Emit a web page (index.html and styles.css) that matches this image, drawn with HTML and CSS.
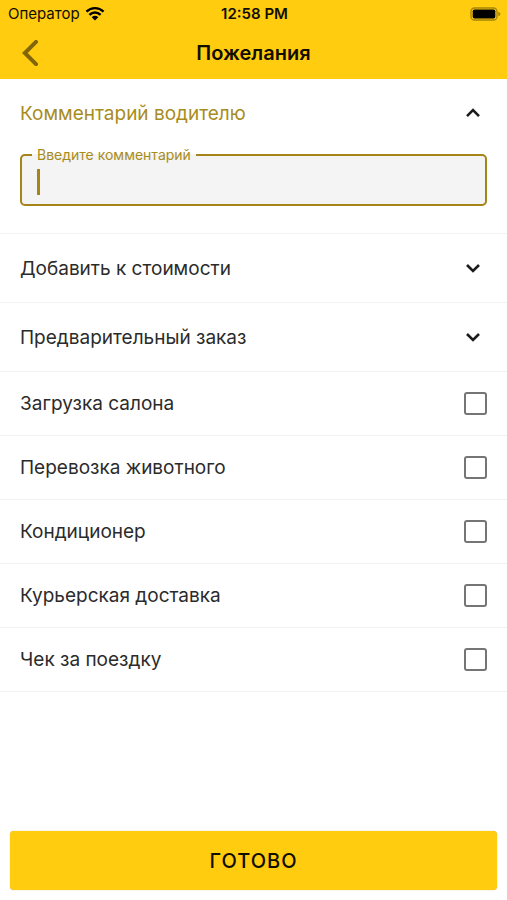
FILE: index.html
```html
<!DOCTYPE html>
<html lang="ru">
<head>
  <meta charset="utf-8">
  <meta name="viewport" content="width=device-width, initial-scale=1">
  <title>Пожелания</title>
  <link rel="stylesheet" href="styles.css">
</head>
<body>
  <header class="header">
    <div class="status">
      <span class="carrier">Оператор
        <svg class="wifi" viewBox="0 0 18 14" aria-hidden="true">
          <path d="M1 5.2C5.6.9 12.4.9 17 5.2M3.8 8.2c3-2.8 7.4-2.8 10.4 0" fill="none" stroke="currentColor" stroke-width="2.3"/>
          <path d="M9 13.6 5.9 10.4c1.8-1.6 4.4-1.6 6.2 0z" fill="currentColor"/>
        </svg>
      </span>
      <time class="clock">12:58 PM</time>
      <svg class="battery" viewBox="0 0 31 14" aria-hidden="true">
        <rect x="1" y="1" width="26" height="12" rx="3.5" fill="none" stroke="#a5840b" stroke-width="1.3"/>
        <rect x="2.7" y="2.5" width="22.6" height="9" rx="1.8" fill="#000"/>
        <path d="M28.3 4.8c2.8 1 2.8 3.4 0 4.4z" fill="#a5840b"/>
      </svg>
    </div>
    <div class="title-bar">
      <button class="back" type="button" aria-label="Назад">
        <svg class="back-icon" viewBox="0 0 16 26" aria-hidden="true"><path d="M14 1.8 2.8 13 14 24.2"/></svg>
      </button>
      <h1 class="title">Пожелания</h1>
    </div>
  </header>

  <main class="options">
    <section class="comment">
      <button class="row row-open" type="button" aria-expanded="true">
        Комментарий водителю
        <svg class="chevron" viewBox="0 0 16 10" aria-hidden="true"><path d="M2 8.2 8 2.2l6 6"/></svg>
      </button>
      <fieldset class="field">
        <legend class="legend"><label for="comment">Введите комментарий</label></legend>
        <span class="caret"></span>
        <input class="input" id="comment" type="text">
      </fieldset>
    </section>
    <button class="row row-section" type="button" aria-expanded="false">
      Добавить к стоимости
      <svg class="chevron" viewBox="0 0 16 10" aria-hidden="true"><path d="m2 2 6 6 6-6"/></svg>
    </button>
    <button class="row row-section" type="button" aria-expanded="false">
      Предварительный заказ
      <svg class="chevron" viewBox="0 0 16 10" aria-hidden="true"><path d="m2 2 6 6 6-6"/></svg>
    </button>
    <label class="row row-check">Загрузка салона <input class="check" type="checkbox"></label>
    <label class="row row-check">Перевозка животного <input class="check" type="checkbox"></label>
    <label class="row row-check">Кондиционер <input class="check" type="checkbox"></label>
    <label class="row row-check">Курьерская доставка <input class="check" type="checkbox"></label>
    <label class="row row-check">Чек за поездку <input class="check" type="checkbox"></label>
  </main>

  <footer class="footer">
    <button class="submit" type="button">ГОТОВО</button>
  </footer>
</body>
</html>
```
FILE: styles.css
```css
* {
  box-sizing: border-box;
}

body {
  display: flex;
  flex-direction: column;
  min-height: 100vh;
  margin: 0;
  background: #fff;
  color: #2b2b2b;
  font-family: Inter, "Liberation Sans", sans-serif;
  font-size: 19px;
}

button {
  border: 0;
  background: none;
  color: inherit;
  font: inherit;
  cursor: pointer;
}

.header {
  background: #ffcc0f;
  color: #110e00;
}

.status {
  display: grid;
  grid-template-columns: 1fr auto 1fr;
  align-items: center;
  height: 27px;
  padding: 0 6px 0 8px;
  font-size: 15px;
}

.carrier {
  display: flex;
  align-items: center;
  gap: 5px;
}

.wifi {
  width: 20px;
  height: 15px;
  color: #000;
}

.clock {
  font-weight: 600;
}

.battery {
  justify-self: end;
  width: 31px;
  height: 14px;
}

.title-bar {
  display: grid;
  grid-template-columns: 64px 1fr 64px;
  align-items: center;
  height: 52px;
}

.back {
  display: flex;
  align-items: center;
  height: 52px;
  padding: 0 22px;
}

.back-icon {
  width: 16px;
  height: 26px;
  fill: none;
  stroke: #806608;
  stroke-linecap: round;
  stroke-width: 4;
}

.title {
  margin: 0;
  font-size: 20px;
  font-weight: 600;
  text-align: center;
}

.options {
  flex: 1;
}

.row {
  display: flex;
  align-items: center;
  justify-content: space-between;
  width: 100%;
  padding: 0 20px;
  text-align: left;
}

.row-open {
  height: 68px;
  padding-right: 26px;
  color: #a88c1c;
}

.row-section {
  height: 69px;
  padding-right: 26px;
  border-bottom: 1px solid #f2f2f2;
}

.row-check {
  height: 64px;
  border-bottom: 1px solid #f2f2f2;
}

.chevron {
  width: 16px;
  height: 10px;
  fill: none;
  stroke: #1c1c1c;
  stroke-width: 2.6;
}

.comment {
  padding-bottom: 27px;
  border-bottom: 1px solid #f2f2f2;
}

.field {
  display: flex;
  align-items: center;
  min-width: 0;
  margin: 0 20px;
  padding: 0 15px;
  border: 2px solid #a5851a;
  border-radius: 5px;
  background: #f4f4f4;
}

.legend {
  margin-left: -5px;
  padding: 0 5px;
  color: #a88c1c;
  font-size: 14px;
  line-height: 16px;
}

.caret {
  width: 3px;
  height: 26px;
  margin-bottom: 4px;
  background: #a5851a;
}

.input {
  flex: 1;
  min-width: 0;
  height: 41px;
  padding: 0;
  border: 0;
  outline: 0;
  background: transparent;
  color: inherit;
  font: inherit;
  caret-color: transparent;
}

.check {
  appearance: none;
  width: 23px;
  height: 23px;
  margin: 0;
  border: 2px solid #757575;
  border-radius: 3px;
}

.check:checked {
  background: #ffcc0f;
}

.footer {
  padding: 10px;
}

.submit {
  display: block;
  width: 100%;
  height: 59px;
  border-radius: 4px;
  background: #ffcc0f;
  box-shadow: 0 0 1px #b8a04a;
  color: #110e00;
  font-size: 20px;
  font-weight: 500;
  letter-spacing: 1px;
}
```
